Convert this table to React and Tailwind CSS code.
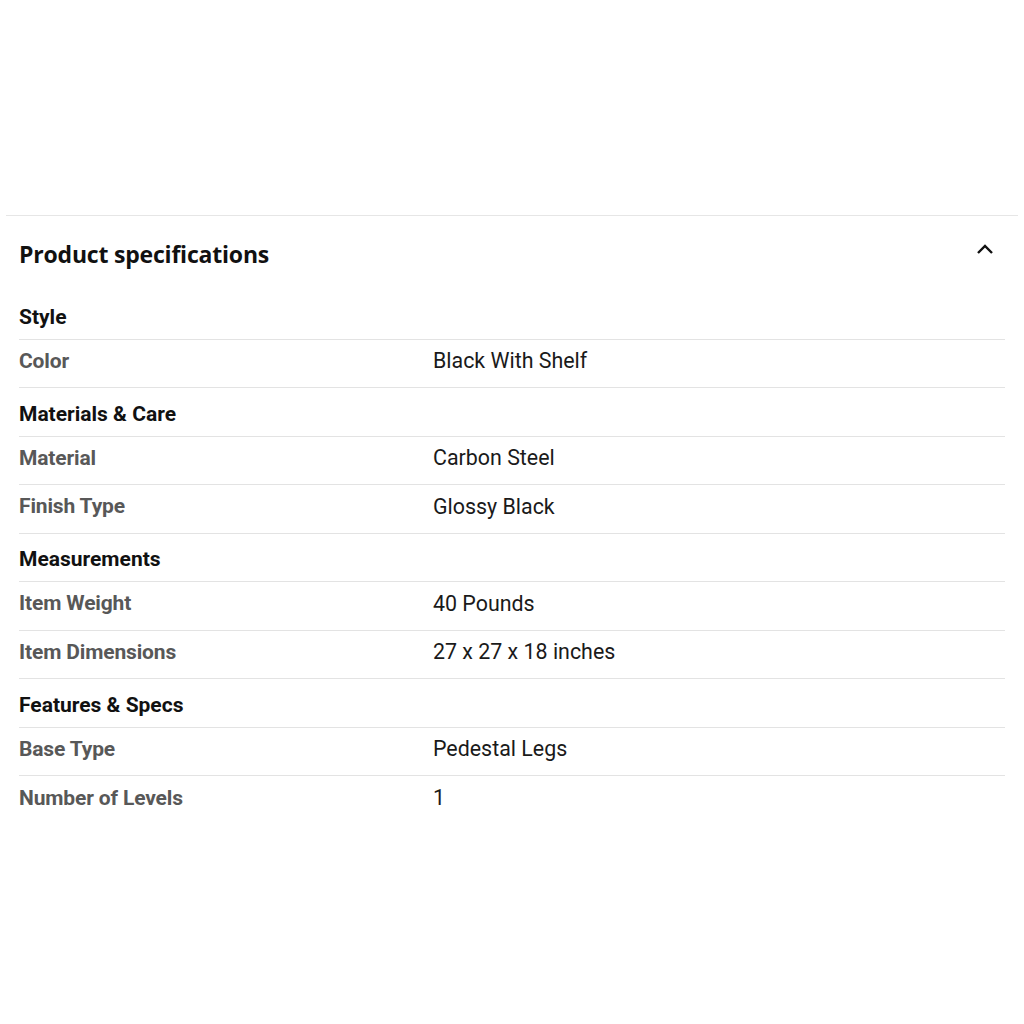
import React from "react";

const sections = [
  { title: "Style", rows: [["Color", "Black With Shelf"]] },
  {
    title: "Materials & Care",
    rows: [
      ["Material", "Carbon Steel"],
      ["Finish Type", "Glossy Black"],
    ],
  },
  {
    title: "Measurements",
    rows: [
      ["Item Weight", "40 Pounds"],
      ["Item Dimensions", "27 x 27 x 18 inches"],
    ],
  },
  {
    title: "Features & Specs",
    rows: [
      ["Base Type", "Pedestal Legs"],
      ["Number of Levels", "1"],
    ],
  },
];

export default function App() {
  const lines = [];
  sections.forEach((s) => {
    lines.push({ type: "head", label: s.title });
    s.rows.forEach(([k, v]) => lines.push({ type: "row", label: k, value: v }));
  });

  return (
    <div className="min-h-screen bg-white pt-[215px] font-['Roboto',sans-serif]">
      <div className="mx-[6px] border-t border-[#e6e6e6]">
        <div className="px-[13px]">
          {/* header */}
          <div className="flex h-[75px] items-center justify-between pt-[2px]">
            <h2 className="font-['Open_Sans',sans-serif] text-[23px] font-bold tracking-[-0.2px] text-[#111]">
              Product specifications
            </h2>
            <svg width="20" height="20" viewBox="0 0 20 20" className="mr-[10px] -mt-[10px]">
              <polyline
                points="3,13 10,6 17,13"
                fill="none"
                stroke="#111"
                strokeWidth="2.4"
              />
            </svg>
          </div>

          {lines.map((l, i) => (
            <div
              key={i}
              className={
                "flex h-[48.5px] items-center " +
                (i < lines.length - 1 ? "border-b border-[#e3e3e3]" : "")
              }
            >
              {l.type === "head" ? (
                <span className="pt-[5px] text-[21px] font-bold text-[#111]">
                  {l.label}
                </span>
              ) : (
                <>
                  <span className="w-[414px] pb-[4px] text-[21px] font-bold tracking-[-0.15px] text-[#585858]">
                    {l.label}
                  </span>
                  <span className="pb-[4px] text-[21.4px] text-[#1a1a1a]">
                    {l.value}
                  </span>
                </>
              )}
            </div>
          ))}
        </div>
      </div>
    </div>
  );
}
